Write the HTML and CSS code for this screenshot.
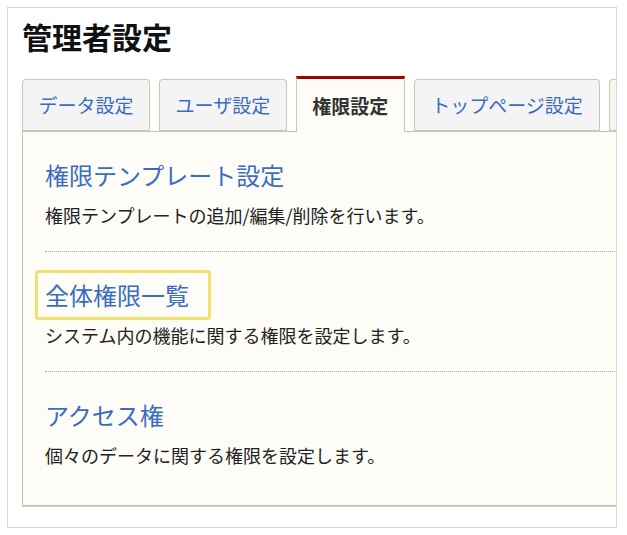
FILE: index.html
```html
<!DOCTYPE html>
<html lang="ja">
<head>
  <meta charset="UTF-8">
  <title>管理者設定</title>
  <link rel="stylesheet" href="styles.css">
</head>
<body>
  <div class="page">
    <h1 class="title">管理者設定</h1>

    <!-- Tabs -->
    <nav class="tabs">
      <a class="tab" href="#">データ設定</a>
      <a class="tab" href="#">ユーザ設定</a>
      <a class="tab active" href="#">権限設定</a>
      <a class="tab wide" href="#">トップページ設定</a>
      <a class="tab" href="#" aria-label="その他の設定"></a>
    </nav>

    <!-- Tab content -->
    <div class="panel">
      <div class="section">
        <h2 class="section-title"><a href="#">権限テンプレート設定</a></h2>
        <p class="section-desc">権限テンプレートの追加/編集/削除を行います。</p>
      </div>
      <div class="section">
        <h2 class="section-title"><a class="focused" href="#">全体権限一覧</a></h2>
        <p class="section-desc">システム内の機能に関する権限を設定します。</p>
      </div>
      <div class="section">
        <h2 class="section-title"><a href="#">アクセス権</a></h2>
        <p class="section-desc">個々のデータに関する権限を設定します。</p>
      </div>
    </div>
  </div>
</body>
</html>
```

FILE: styles.css
```css
/* General Reset */
* {
  box-sizing: border-box;
  margin: 0;
  padding: 0;
}

body {
  font-family: "Noto Sans CJK JP", "Noto Sans", sans-serif;
  background: #fff;
  color: #222;
}

a {
  text-decoration: none;
}

/* Outer frame */
.page {
  margin: 7px;
  width: 610px;
  height: 521px;
  padding: 8px 0 0 14px;
  border: 1px solid #d4d4d4;
  overflow: hidden;
}

.title {
  font-size: 30px;
  line-height: 40px;
  font-weight: bold;
  color: #111;
  margin-bottom: 20px;
}

/* Tabs */
.tabs {
  display: flex;
  align-items: flex-end;
  gap: 9px;
  margin-bottom: -1px;
  position: relative;
  z-index: 1;
}

.tab {
  flex-shrink: 0;
  min-width: 40px;
  height: 53px;
  line-height: 50px;
  padding: 0 15.5px;
  font-size: 19px;
  color: #3a6cc0;
  white-space: nowrap;
  background: #f4f4f4;
  border: 1px solid #d2c8a6;
  border-bottom: 2px solid #c6c6c6;
  border-radius: 4px 4px 0 0;
}

.tab.wide {
  padding: 0 16.5px;
}

.tab.active {
  height: 56px;
  line-height: 53px;
  color: #333;
  font-weight: bold;
  background: #fdfcf7;
  border-top: 3px solid #a50000;
  border-bottom: none;
  border-radius: 0;
}

/* Panel */
.panel {
  margin-right: -20px;
  height: 375px;
  padding-left: 22px;
  background: #fdfcf7;
  border: 1px solid #c9c0a0;
  box-shadow: 0 1px 0 #d0d0d0;
}

.section {
  padding: 25px 0 23px;
  border-bottom: 1px dotted #a8a8a8;
}

.section:last-child {
  border-bottom: none;
}

.section-title {
  font-size: 24px;
  line-height: 36px;
  font-weight: normal;
  margin-bottom: 9px;
}

.section-title a {
  color: #3a6cc0;
}

/* keyboard focus ring on the selected link */
.section-title a.focused {
  display: inline-block;
  padding: 4px 19px 4px 7px;
  margin: -7px 0 -7px -10px;
  border: 3px solid #f2e170;
  border-radius: 3px;
}

.section-desc {
  font-size: 18px;
  line-height: 26px;
}
```
